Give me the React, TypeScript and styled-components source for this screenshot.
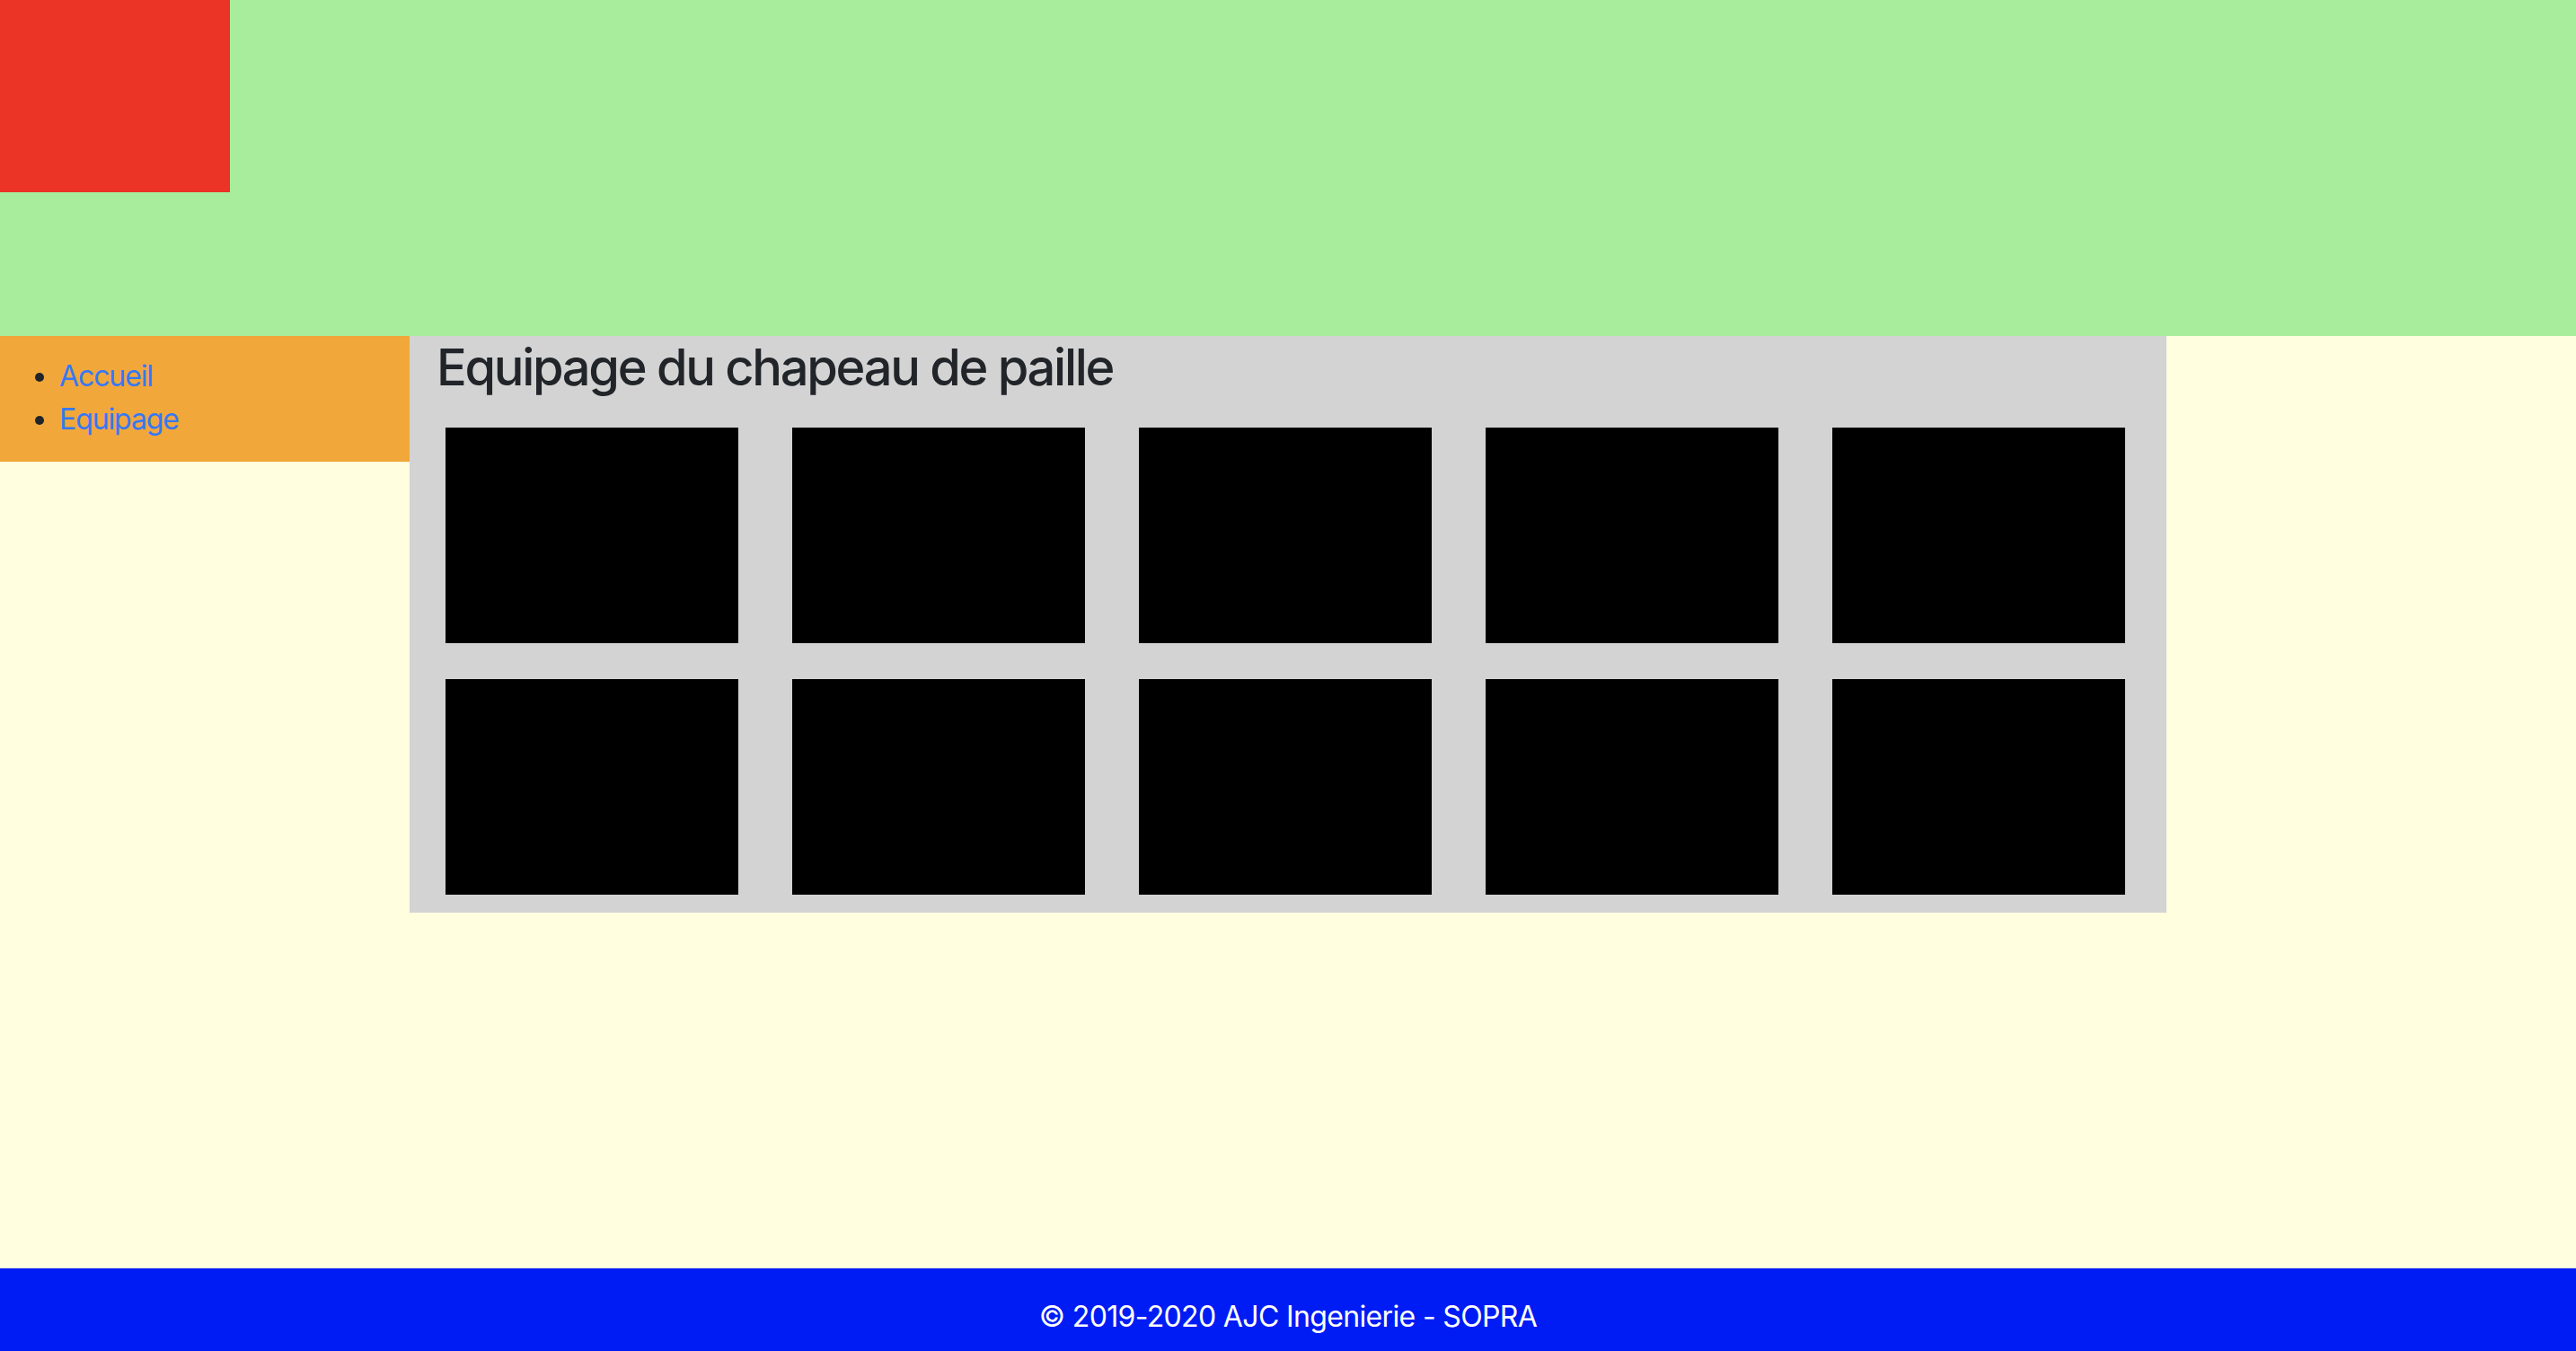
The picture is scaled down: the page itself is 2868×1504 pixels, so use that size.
import React from "react";
import styled, { createGlobalStyle } from "styled-components";

const GlobalStyle = createGlobalStyle`
  html, body { margin: 0; padding: 0; }
  body {
    font-family: Inter, "Noto Sans", "Liberation Sans", sans-serif;
    background: #ffffe0;
    color: #212529;
  }
  * { box-sizing: border-box; }
`;

const Page = styled.div`
  min-height: 1504px;
  display: flex;
  flex-direction: column;
  background: #ffffe0;
`;

const Header = styled.header`
  height: 374px;
  background: #a7ed9c;
  display: flex;
  align-items: flex-start;
`;

const Logo = styled.div`
  width: 256px;
  height: 214px;
  background: #eb3425;
`;

const Body = styled.div`
  flex: 1;
  display: flex;
  align-items: flex-start;
`;

const Sidebar = styled.nav`
  width: 456px;
  height: 140px;
  background: #f1a73a;
  padding-top: 21px;
`;

const NavList = styled.ul`
  margin: 0;
  padding-left: 66px;
  font-size: 32px;
  line-height: 48px;
  letter-spacing: -1.1px;
  color: #212529;
`;

const NavLink = styled.a`
  color: #3478f6;
  text-decoration: none;
`;

const Main = styled.main`
  width: 1956px;
  height: 642px;
  background: #d3d3d3;
  padding: 2px 46px 0 40px;
`;

const Title = styled.h3`
  margin: 0 0 33px -10px;
  font-size: 56px;
  font-weight: 500;
  line-height: 67px;
  letter-spacing: -2.3px;
  color: #212529;
`;

const Grid = styled.div`
  display: grid;
  grid-template-columns: repeat(5, 326px);
  column-gap: 60px;
  row-gap: 40px;
`;

const Member = styled.div`
  height: 240px;
  background: #000;
`;

const Footer = styled.footer`
  height: 92px;
  background: #001cf5;
  color: #fff;
  text-align: center;
  font-size: 32px;
  line-height: 48px;
  letter-spacing: -0.65px;
  padding-top: 30px;
`;

export default function App() {
  return (
    <>
      <GlobalStyle />
      <Page>
        <Header>
          <Logo />
        </Header>
        <Body>
          <Sidebar>
            <NavList>
              <li><NavLink href="#">Accueil</NavLink></li>
              <li><NavLink href="#">Equipage</NavLink></li>
            </NavList>
          </Sidebar>
          <Main>
            <Title>Equipage du chapeau de paille</Title>
            <Grid>
              {Array.from({ length: 10 }).map((_, i) => (
                <Member key={i} />
              ))}
            </Grid>
          </Main>
        </Body>
        <Footer>© 2019-2020 AJC Ingenierie - SOPRA</Footer>
      </Page>
    </>
  );
}
